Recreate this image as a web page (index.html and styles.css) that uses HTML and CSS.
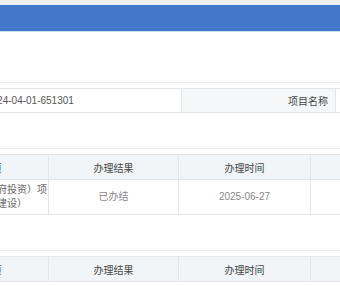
FILE: index.html
```html
<!DOCTYPE html>
<html lang="zh-CN">
<head>
  <meta charset="UTF-8">
  <title>项目办理详情</title>
  <link rel="stylesheet" href="styles.css">
</head>
<body>
  <header class="titlebar"></header>

  <main class="panel">
    <!-- 基本信息 -->
    <section class="section">
      <table class="info-table">
        <colgroup>
          <col style="width:100px">
          <col style="width:197px">
          <col style="width:154px">
          <col style="width:109px">
        </colgroup>
        <tr>
          <td class="label">项目代码</td>
          <td class="value">2024-04-01-651301</td>
          <td class="label">项目名称</td>
          <td class="value"></td>
        </tr>
      </table>
    </section>

    <!-- 审批事项 -->
    <section class="section">
      <table class="grid">
        <colgroup>
          <col style="width:48px">
          <col style="width:116px">
          <col style="width:130px">
          <col style="width:132px">
          <col style="width:134px">
        </colgroup>
        <tr>
          <th>序号</th>
          <th class="item-head">办理事项</th>
          <th>办理结果</th>
          <th>办理时间</th>
          <th>办理部门</th>
        </tr>
        <tr class="data">
          <td>1</td>
          <td class="item">审批（政府投资）项<br>目（基本建设）</td>
          <td>已办结</td>
          <td>2025-06-27</td>
          <td></td>
        </tr>
      </table>
    </section>

    <!-- 核准事项 -->
    <section class="section">
      <table class="grid">
        <colgroup>
          <col style="width:48px">
          <col style="width:116px">
          <col style="width:130px">
          <col style="width:132px">
          <col style="width:134px">
        </colgroup>
        <tr>
          <th>序号</th>
          <th class="item-head">办理事项</th>
          <th>办理结果</th>
          <th>办理时间</th>
          <th>办理部门</th>
        </tr>
      </table>
    </section>
  </main>
</body>
</html>
```

FILE: styles.css
```css
body {
  margin: 0;
  background: #ffffff;
  font-family: "Liberation Sans", "Noto Sans CJK SC", sans-serif;
  font-size: 10px;
  color: #666;
  overflow: hidden;
}

/* Blue title bar of the dialog */
.titlebar {
  height: 26px;
  background: #4377ca;
  border-top: 5px solid #eef0f3;
  box-shadow: 0 1px 0 #cddff2;
}

.panel {
  width: 560px;
  margin-left: -116px;
  padding-top: 51px;
}

.section {
  border-top: 1px solid #e9ebee;
  padding-top: 5px;
  margin-bottom: 35px;
}

table {
  width: 560px;
  border-collapse: collapse;
  table-layout: fixed;
}

td, th {
  border: 1px solid #e3e6e9;
  padding: 0 6px;
  white-space: nowrap;
  overflow: hidden;
}

/* Info row */
.info-table td {
  height: 23px;
}

.info-table .label {
  background: #f5f7f8;
  color: #444;
  text-align: right;
  padding-right: 7px;
}

.info-table .value {
  color: #555;
  padding-left: 1px;
}

/* Result tables */
.grid th {
  height: 24px;
  background: #f1f5f7;
  color: #444;
  font-weight: normal;
  text-align: center;
}

.grid .item-head {
  padding-right: 24px;
}

.grid .data td {
  height: 34px;
  text-align: center;
  color: #888;
  line-height: 14px;
}

.grid .data .item {
  text-align: left;
  padding-left: 24px;
  color: #666;
}
```
